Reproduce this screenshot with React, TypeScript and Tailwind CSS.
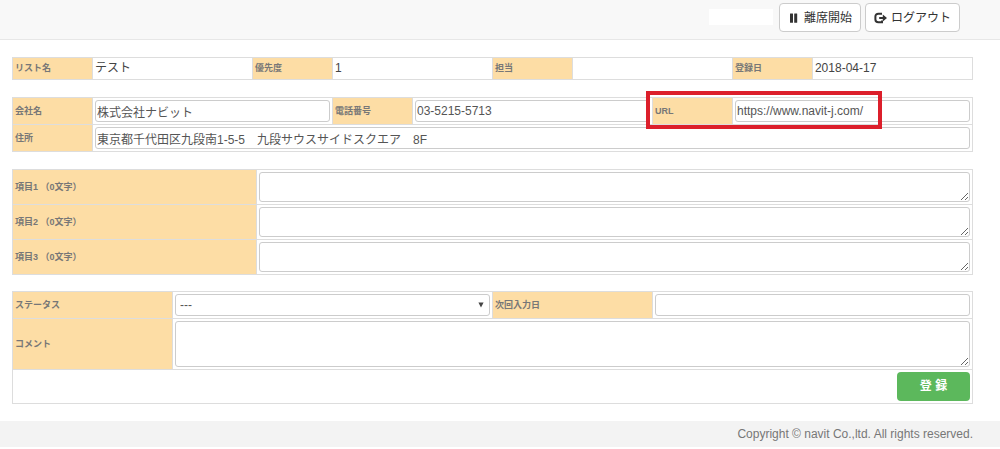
import { useState } from "react";

const PauseIcon = () => (
  <svg viewBox="0 0 12 12" className="w-3 h-3" fill="currentColor" aria-hidden="true">
    <rect x="2" y="1.4" width="3" height="9.4" rx="0.4" />
    <rect x="6.2" y="1.4" width="3" height="9.4" rx="0.4" />
  </svg>
);

const LogoutIcon = () => (
  <svg viewBox="0 0 13 12" className="w-[13px] h-3" aria-hidden="true">
    <path
      d="M8 1.8H4.4C2.5 1.8 1.4 2.8 1.4 4.6V7.4C1.4 9.2 2.5 10.2 4.4 10.2H8V8.6"
      fill="none"
      stroke="currentColor"
      strokeWidth="2"
    />
    <path d="M5.2 4.9H8.8V2.6L13 6L8.8 9.4V7.1H5.2Z" fill="currentColor" />
  </svg>
);

const table = "w-full table-fixed border-collapse border border-[#ddd]";
const th =
  "border border-[#ddd] bg-[#fddda5] p-0.5 text-left text-[9px] leading-[17px] font-bold text-[#777]";
const td = "border border-[#ddd] p-0.5 leading-[17px]";
const field =
  "block w-full rounded-[3px] border border-[#ccc] bg-white px-px text-xs text-[#555]";
const headerButton =
  "flex h-[29px] items-center gap-1 rounded border border-[#ccc] bg-white px-2 text-[#333]";

const summary = [
  { label: "リスト名", value: "テスト" },
  { label: "優先度", value: "1" },
  { label: "担当", value: "" },
  { label: "登録日", value: "2018-04-17" },
];

const App = () => {
  const [company, setCompany] = useState("株式会社ナビット");
  const [tel, setTel] = useState("03-5215-5713");
  const [url, setUrl] = useState("https://www.navit-j.com/");
  const [address, setAddress] = useState(
    "東京都千代田区九段南1-5-5　九段サウスサイドスクエア　8F"
  );
  const [items, setItems] = useState(["", "", ""]);

  const updateItem = (index: number, value: string) => {
    setItems(items.map((item, i) => (i === index ? value : item)));
  };

  return (
    <div className="bg-white text-xs text-[#444] font-['Liberation_Sans','Noto_Sans_CJK_JP',sans-serif]">
      {/* Header */}
      <header className="flex h-10 items-start justify-end gap-1 border-b border-[#e7e7e7] bg-[#f8f8f8] pt-[3px] pr-10">
        <div className="mt-1.5 mr-0.5 h-4 w-16 bg-white" />
        <button type="button" className={headerButton}>
          <PauseIcon />
          離席開始
        </button>
        <button type="button" className={headerButton}>
          <LogoutIcon />
          ログアウト
        </button>
      </header>

      <main className="pt-[17px] pr-[27px] pl-3">
        {/* Summary */}
        <table className={`${table} mb-[17px]`}>
          <colgroup>
            {summary.map((item) => [
              <col key={`${item.label}-h`} className="w-1/12" />,
              <col key={`${item.label}-v`} className="w-2/12" />,
            ])}
          </colgroup>
          <tbody>
            <tr>
              {summary.map((item) => [
                <th key={`${item.label}-h`} scope="row" className={th}>
                  {item.label}
                </th>,
                <td key={`${item.label}-v`} className={td}>
                  {item.value}
                </td>,
              ])}
            </tr>
          </tbody>
        </table>

        {/* Company */}
        <div className="relative mb-[17px]">
          <table className={table}>
            <colgroup>
              <col className="w-1/12" />
              <col className="w-3/12" />
              <col className="w-1/12" />
              <col className="w-3/12" />
              <col className="w-1/12" />
              <col className="w-3/12" />
            </colgroup>
            <tbody>
              <tr>
                <th className={th}>
                  <label htmlFor="company">会社名</label>
                </th>
                <td className={td}>
                  <input
                    id="company"
                    type="text"
                    className={`${field} h-[22px]`}
                    value={company}
                    onChange={(e) => setCompany(e.target.value)}
                  />
                </td>
                <th className={th}>
                  <label htmlFor="tel">電話番号</label>
                </th>
                <td className={td}>
                  <input
                    id="tel"
                    type="tel"
                    className={`${field} h-[22px]`}
                    value={tel}
                    onChange={(e) => setTel(e.target.value)}
                  />
                </td>
                <th className={th}>
                  <label htmlFor="url">URL</label>
                </th>
                <td className={td}>
                  <input
                    id="url"
                    type="text"
                    className={`${field} h-[22px]`}
                    value={url}
                    onChange={(e) => setUrl(e.target.value)}
                  />
                </td>
              </tr>
              <tr>
                <th className={th}>
                  <label htmlFor="address">住所</label>
                </th>
                <td colSpan={5} className={td}>
                  <input
                    id="address"
                    type="text"
                    className={`${field} h-[22px]`}
                    value={address}
                    onChange={(e) => setAddress(e.target.value)}
                  />
                </td>
              </tr>
            </tbody>
          </table>
          {/* Highlight around the URL field */}
          <div className="pointer-events-none absolute -top-1.5 left-[66%] h-[38px] w-[24.5%] border-4 border-[#dc1f2b]" />
        </div>

        {/* Free items */}
        <table className={`${table} mb-4`}>
          <colgroup>
            <col className="w-[25.4%]" />
            <col />
          </colgroup>
          <tbody>
            {items.map((item, index) => (
              <tr key={index}>
                <th className={th}>
                  <label htmlFor={`item${index + 1}`}>
                    項目{index + 1} （{item.length}文字）
                  </label>
                </th>
                <td className={td}>
                  <textarea
                    id={`item${index + 1}`}
                    className={`${field} h-[30px] resize`}
                    value={item}
                    onChange={(e) => updateItem(index, e.target.value)}
                  />
                </td>
              </tr>
            ))}
          </tbody>
        </table>

        {/* Status */}
        <table className={`${table} mb-[17px]`}>
          <colgroup>
            <col className="w-2/12" />
            <col className="w-4/12" />
            <col className="w-2/12" />
            <col className="w-4/12" />
          </colgroup>
          <tbody>
            <tr>
              <th className={th}>
                <label htmlFor="status">ステータス</label>
              </th>
              <td className={td}>
                <div className="relative">
                  <select id="status" className={`${field} h-[22px] appearance-none pl-1`}>
                    <option>---</option>
                  </select>
                  <svg
                    viewBox="0 0 6 6"
                    className="pointer-events-none absolute top-2 right-1.5 h-1.5 w-1.5"
                    aria-hidden="true"
                  >
                    <path d="M0.4 0.4H5.6L3 5.6Z" fill="#444" />
                  </svg>
                </div>
              </td>
              <th className={th}>
                <label htmlFor="nextDate">次回入力日</label>
              </th>
              <td className={td}>
                <input id="nextDate" type="text" className={`${field} h-[22px]`} />
              </td>
            </tr>
            <tr>
              <th className={th}>
                <label htmlFor="comment">コメント</label>
              </th>
              <td colSpan={3} className={td}>
                <textarea id="comment" className={`${field} h-[46px] resize`} />
              </td>
            </tr>
            <tr>
              <td colSpan={4} className={td}>
                <button
                  type="button"
                  className="ml-auto block h-[29px] w-[73px] rounded bg-[#5cb85c] font-bold text-white"
                >
                  登 録
                </button>
              </td>
            </tr>
          </tbody>
        </table>
      </main>

      {/* Footer */}
      <footer className="bg-[#f3f3f3] pr-[27px] text-right text-xs leading-[26px] text-[#777]">
        Copyright © navit Co.,ltd. All rights reserved.
      </footer>
    </div>
  );
};

export default App;
